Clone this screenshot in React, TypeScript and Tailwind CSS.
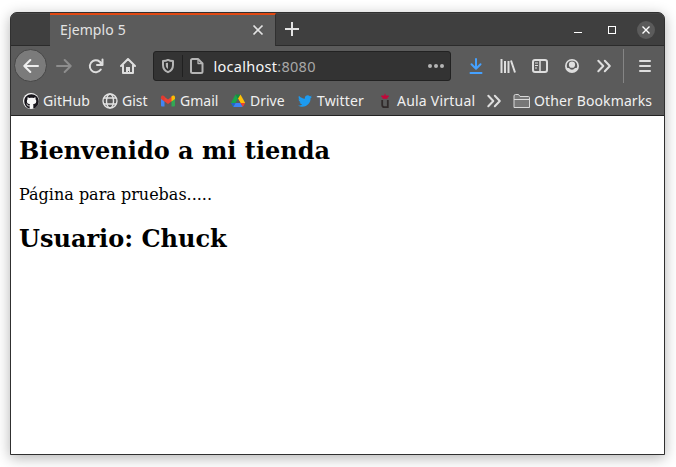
import type { ReactNode } from "react";
import { FaGithub, FaTwitter } from "react-icons/fa";

function Icon({ children, className = "" }: { children: ReactNode; className?: string }) {
  return (
    <svg
      viewBox="0 0 16 16"
      className={`h-4 w-4 shrink-0 ${className}`}
      fill="none"
      stroke="currentColor"
      strokeWidth="2"
      strokeLinecap="round"
      strokeLinejoin="round"
    >
      {children}
    </svg>
  );
}

function ToolButton({ children, className = "" }: { children: ReactNode; className?: string }) {
  return (
    <button className={`flex h-8 w-8 shrink-0 items-center justify-center ${className}`}>
      <Icon>{children}</Icon>
    </button>
  );
}

function Bookmark({ icon, label, className }: { icon: ReactNode; label: string; className: string }) {
  return (
    <a className={`flex shrink-0 items-center gap-1 whitespace-nowrap ${className}`}>
      {icon}
      <span>{label}</span>
    </a>
  );
}

const chevrons = <path d="M2.300 2.800L7.300 8l-5 5.200M8.800 2.800L13.800 8l-5 5.200" />;

function TitleBar() {
  return (
    <header className="flex h-[33px] shrink-0 border-t border-[#484848] bg-[#3f3f3f] text-[#e3e3e3]">
      <div className="w-[39px] border-b border-[#2b2b2b]" />
      <div className="-mt-px flex w-[226px] items-center justify-between border-r border-t-2 border-r-[#303030] border-t-[#e24912] bg-[#5b5b5b] pl-[10px] pr-[11px]">
        <span className="-mt-px text-[14px] leading-5 tracking-[0.12px]">Ejemplo 5</span>
        <svg viewBox="0 0 12 12" className="-mt-px h-3 w-3" stroke="currentColor" strokeWidth="1.7">
          <path d="M1.500 1.500l9 9M10.500 1.500l-9 9" />
        </svg>
      </div>
      <div className="flex flex-1 items-center border-b border-[#2b2b2b] pl-[9px] pr-[9px]">
        <svg viewBox="0 0 14 14" className="-mt-[2px] h-3.5 w-3.5" stroke="currentColor" strokeWidth="2">
          <path d="M7 0v14M0 7h14" />
        </svg>
        <div className="ml-auto flex items-center">
          <div className="mr-[26px] mt-[5px] h-px w-2 bg-white" />
          <div className="mr-[21px] h-2 w-2 border border-white" />
          <div className="flex h-[18px] w-[18px] items-center justify-center rounded-full bg-[#5b5b5b]">
            <svg viewBox="0 0 8 8" className="h-2 w-2" stroke="white" strokeWidth="1.4">
              <path d="M.5 .5l7 7M7.500 .5l-7 7" />
            </svg>
          </div>
        </div>
      </div>
    </header>
  );
}

function UrlBar() {
  return (
    <div className="mx-[9px] mt-px flex h-[30px] w-[298px] shrink-0 items-center rounded-[3px] border border-[#222222] bg-[#333333] text-[#b5b5b5]">
      <Icon className="ml-[6px]">
        <path d="M8 1.900c1.500.8 3.200 1.100 5 1.200V7c0 3.600-1.600 5.800-5 7.200C4.600 12.800 3 10.600 3 7V3.100c1.800-.1 3.500-.4 5-1.200z" />
        <path d="M8 4.800v6.300c-1.600-.9-2.200-2.300-2.200-4V5z" fill="currentColor" stroke="none" />
      </Icon>
      <div className="ml-[6px] h-[22px] w-px bg-[#202020]" />
      <Icon className="ml-[6px]">
        <path d="M3.500 1H9l4.500 4.500V13.500a1.500 1.500 0 0 1-1.500 1.500H3.500A1.500 1.500 0 0 1 2 13.500V2.500A1.500 1.500 0 0 1 3.500 1z" />
        <path d="M9 1.500V5.500h4" strokeWidth="1.300" />
      </Icon>
      <span className="ml-[8.500px] whitespace-nowrap text-[14.500px] leading-5 tracking-[0.28px] text-[#a8a8a8]">
        <span className="text-[#f7f7f7]">localhost</span>:8080
      </span>
      <Icon className="ml-auto mr-[6px]">
        <g fill="currentColor" stroke="none">
          <circle cx="2" cy="8" r="2" />
          <circle cx="8" cy="8" r="2" />
          <circle cx="14" cy="8" r="2" />
        </g>
      </Icon>
    </div>
  );
}

function Toolbar() {
  return (
    <nav className="-mt-px flex h-[41px] shrink-0 items-center pl-1 text-[#dedede]">
      <button className="-ml-px mr-px flex h-[33px] w-[33px] shrink-0 items-center justify-center rounded-full border border-[#474747] bg-[#7b7b7b] text-[#ededed]">
        <Icon>
          <path d="M15 8H1.500M7.300 2L1.300 8l6 6" />
        </Icon>
      </button>
      <ToolButton className="text-[#8d8d8d]">
        <path d="M1 8h13.500M8.700 2l6 6-6 6" />
      </ToolButton>
      <ToolButton>
        <path d="M14.500 1.500v5.500h-5.500M13.500 6.300A6 6 0 1 0 12.800 11.500" />
        <path d="M14.500 3v4.300h-4.500z" fill="currentColor" stroke="none" />
      </ToolButton>
      <ToolButton>
        <path d="M1 8l7-7 7 7M3 7.500V15h10V7.500" />
        <path d="M6 15V9h4v6H9v-2H8v2z" fill="currentColor" stroke="none" />
      </ToolButton>
      <UrlBar />
      <ToolButton className="text-[#45a1ff]">
        <path d="M8 1v9M3.500 6.300L8 10.700l4.500-4.400M2.500 15h11" />
      </ToolButton>
      <ToolButton>
        <path d="M1.500 1v14M5 3v12M8.500 3v12M11 2.500L15 14.500" strokeLinecap="butt" />
      </ToolButton>
      <ToolButton>
        <rect x="1" y="2" width="14" height="12" rx="2" />
        <path d="M8 2v12" strokeWidth="1.500" />
        <path d="M3 5h3M3 7.500h3M3 10h2" strokeWidth="1" strokeLinecap="butt" />
      </ToolButton>
      <ToolButton>
        <circle cx="8" cy="8" r="7" fill="currentColor" stroke="none" />
        <path d="M8 2.800C4.500 2.800 2.800 5 2.800 8c0 1 .3 1.500.6 1.900h1.800c.8 2.300 4.800 2.300 5.600 0h1.800c.3-.4.6-.9.6-1.900 0-3-1.700-5.200-5.200-5.200z" fill="#5b5b5b" stroke="none" />
        <circle cx="8" cy="6.700" r="3.100" fill="currentColor" stroke="none" />
      </ToolButton>
      <ToolButton>{chevrons}</ToolButton>
      <div className="ml-[3px] mr-[5px] h-[34px] w-px shrink-0 bg-[#858585]" />
      <ToolButton>
        <path d="M3 3h10M3 8h10M3 13h10" />
      </ToolButton>
    </nav>
  );
}

function BookmarksBar() {
  return (
    <nav className="flex h-[30px] shrink-0 items-center border-b border-[#222222] pl-3 pt-px text-[14px] leading-5 text-[#f0f0f0]">
      <Bookmark
        className="w-[79px] tracking-[0.08px]"
        label="GitHub"
        icon={
          <span className="flex h-4 w-4 items-center justify-center rounded-full bg-[#f6f6f6] text-[#17151b]">
            <FaGithub className="h-[15px] w-[15px]" />
          </span>
        }
      />
      <Bookmark
        className="w-[58px]"
        label="Gist"
        icon={
          <svg viewBox="0 0 16 16" className="h-4 w-4" fill="none" stroke="#e2e2e2" strokeWidth="1.400">
            <circle cx="8" cy="8" r="7" />
            <ellipse cx="8" cy="8" rx="3.500" ry="7" />
            <path d="M2 5h12M2 11h12" />
          </svg>
        }
      />
      <Bookmark
        className="w-[70px]"
        label="Gmail"
        icon={
          <svg viewBox="0 0 16 16" className="h-4 w-4">
            <path d="M1 5l3.500 2.500V13.500H2a1 1 0 0 1-1-1z" fill="#4285f4" />
            <path d="M15 5l-3.500 2.500V13.500H14a1 1 0 0 0 1-1z" fill="#34a853" />
            <path d="M4 3.500L8 6.500l4-3v4.500L8 11 4 8z" fill="#ea4335" />
            <path d="M1 4.200c0-1.800 2-2.300 3.500-1V8.500L1 6z" fill="#e33b30" />
            <path d="M15 4.200c0-1.800-2-2.300-3.500-1V8.500L15 6z" fill="#fbbc04" />
          </svg>
        }
      />
      <Bookmark
        className="w-[67px]"
        label="Drive"
        icon={
          <svg viewBox="0 0 16 16" className="h-4 w-4">
            <path d="M5.500 1.500L8 5.800 3.300 14 1 10z" fill="#18a84b" />
            <path d="M5.500 1.500h5L8 5.800z" fill="#168d3d" />
            <path d="M10.500 1.500L15.200 10h-4.700L8 5.800z" fill="#ffc107" />
            <path d="M1 10h4.600l-2.300 4z" fill="#2563c9" />
            <path d="M5.600 10h4.900l2.300 4H3.300z" fill="#3b82f6" />
            <path d="M10.500 10h4.700l-2.400 4z" fill="#ea4335" />
            <path d="M8 5.800l2.500 4.200H5.600z" fill="#5b5b5b" />
          </svg>
        }
      />
      <Bookmark
        className="w-[80px] tracking-[0.15px]"
        label="Twitter"
        icon={<FaTwitter className="h-4 w-4 p-px text-[#1d9bf0]" />}
      />
      <Bookmark
        className="w-[109px] tracking-[0.22px]"
        label="Aula Virtual"
        icon={
          <svg viewBox="0 0 16 16" className="h-4 w-4">
            <path d="M7.500 .8h1v1.700h3l.5 1-1.500 1v1.300h-5V4.500L4 3.500l.5-1h3z" fill="#c40539" />
            <path d="M5.200 7v5q0 2.200 2.300 2.200H11M10.800 7v8" fill="none" stroke="#302a2a" strokeWidth="1.800" />
          </svg>
        }
      />
      <Icon className="mr-[11px] text-[#dedede]">{chevrons}</Icon>
      <Bookmark
        className="w-[140px] tracking-[0.12px]"
        label="Other Bookmarks"
        icon={
          <svg viewBox="0 0 17 16" className="h-4 w-[17px]" fill="#777777" stroke="#d8d8d8">
            <path d="M1 14.500V3q0-1.500 1.500-1.500h3L7 3.500h8.500q1 0 1 1v10zM1 6.500h15.500" />
          </svg>
        }
      />
    </nav>
  );
}

export default function App() {
  return (
    <div className="h-[467px] w-[676px] overflow-hidden bg-white pl-[10px] pt-3 font-['Noto_Sans',sans-serif]">
      <main className="flex h-[443px] w-[655px] flex-col overflow-hidden rounded-t-[7px] border border-[#303030] bg-[#5b5b5b] shadow-[0_3px_14px_rgba(0,0,0,0.3)]">
        <TitleBar />
        <Toolbar />
        <BookmarksBar />
        <section className="flex-1 bg-white px-2 font-['DejaVu_Serif',serif] text-base leading-[19px] text-black">
          <h2 className="mt-[21px] text-2xl leading-7 font-bold">Bienvenido a mi tienda</h2>
          <p className="mt-5">Página para pruebas.....</p>
          <h2 className="mt-[21px] text-2xl leading-7 font-bold">Usuario: Chuck</h2>
        </section>
      </main>
    </div>
  );
}
